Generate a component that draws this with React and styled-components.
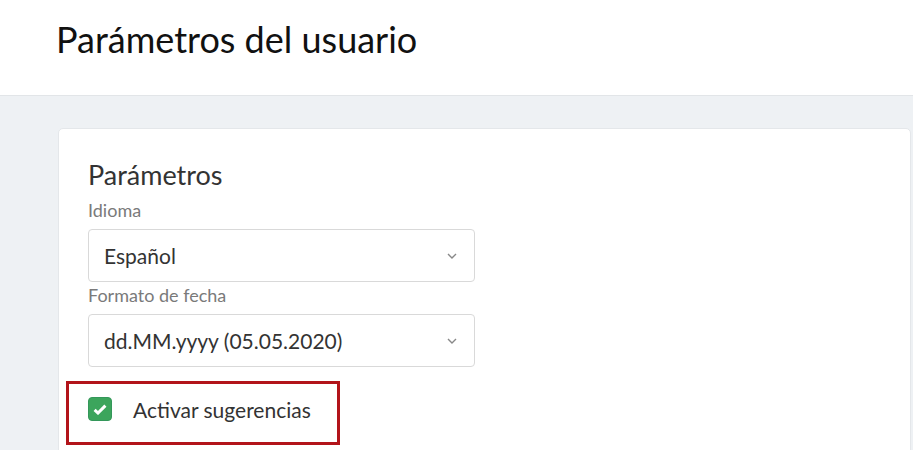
import React from "react";
import { styled, createGlobalStyle } from "styled-components";

const GlobalStyle = createGlobalStyle`
	html, body {
		margin: 0;
		padding: 0;
		background: #eef1f4;
		font-family: Lato, "Open Sans", sans-serif;
		color: #222;
	}
`;

// top white bar with the page title
const Header = styled.header`
	height: 96px;
	background: #fff;
	border-bottom: 1px solid #e2e5e8;
	display: flex;
	align-items: flex-start;
	padding: 18px 0 0 56px;
	box-sizing: border-box;
`;

const PageTitle = styled.h1`
	margin: 0;
	font-weight: 400;
	font-size: 36px;
	line-height: 43px;
	color: #111;
`;

const Main = styled.main`
	padding: 32px 2px 0 58px;
`;

const Card = styled.section`
	background: #fff;
	border: 1px solid #e4e7ea;
	border-radius: 5px;
	padding: 30px 29px 12px;
	min-height: 320px;
`;

const CardTitle = styled.h2`
	margin: 0 0 8px;
	font-weight: 400;
	font-size: 27px;
	line-height: 32px;
	color: #333;
`;

const Label = styled.div`
	font-size: 18px;
	line-height: 22px;
	color: #7a7a7a;
	margin-bottom: 8px;
`;

const Select = styled.div`
	width: 387px;
	height: 53px;
	box-sizing: border-box;
	border: 1px solid #d9d9d9;
	border-radius: 4px;
	display: flex;
	align-items: center;
	justify-content: space-between;
	padding: 0 17px 0 15px;
	font-size: 21px;
	color: #333;
	margin-bottom: ${(p) => p.$gap || 0}px;
`;

const Chevron = () => (
	<svg width="10" height="6" viewBox="0 0 10 6">
		<path d="M1 1l4 4 4-4" fill="none" stroke="#888" strokeWidth="1.4" />
	</svg>
);

// red annotation frame round the checkbox row
const CheckRow = styled.label`
	display: flex;
	align-items: center;
	gap: 21px;
	width: 274px;
	height: 64px;
	box-sizing: border-box;
	border: 3px solid #b2141a;
	margin: 14px 0 0 -22px;
	padding: 0 0 8px 19px;
	font-size: 21px;
	color: #333;
`;

const Box = styled.span`
	width: 24px;
	height: 24px;
	box-sizing: border-box;
	border-radius: 4px;
	background: #3ca55c;
	border: 1px solid #34975a;
	display: flex;
	align-items: center;
	justify-content: center;
`;

const App = () => {
	return (
		<>
			<GlobalStyle />
			<Header>
				<PageTitle>Parámetros del usuario</PageTitle>
			</Header>
			<Main>
				<Card>
					<CardTitle>Parámetros</CardTitle>
					<Label>Idioma</Label>
					<Select $gap={2}>
						Español
						<Chevron />
					</Select>
					<Label>Formato de fecha</Label>
					<Select>
						dd.MM.yyyy (05.05.2020)
						<Chevron />
					</Select>
					<CheckRow>
						<Box>
							<svg width="14" height="11" viewBox="0 0 14 11">
								<path
									d="M1.6 5.8l3.4 3.2 7.4-7.4"
									fill="none"
									stroke="#fff"
									strokeWidth="3"
								/>
							</svg>
						</Box>
						Activar sugerencias
					</CheckRow>
				</Card>
			</Main>
		</>
	);
};

export default App;
